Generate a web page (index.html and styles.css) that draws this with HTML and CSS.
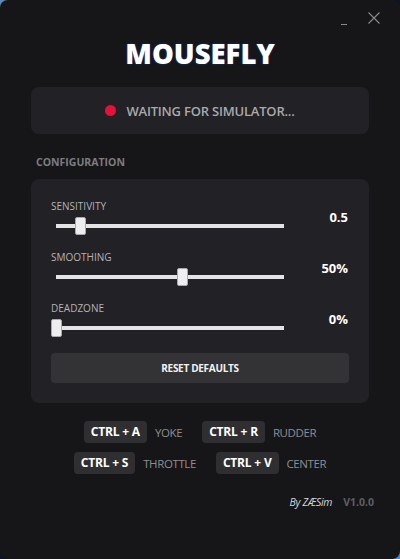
FILE: index.html
```html
<!DOCTYPE html>
<html lang="en">
<head>
<meta charset="utf-8">
<title>MouseFly</title>
<link rel="stylesheet" href="styles.css">
</head>
<body>
<div class="window">
  <div class="titlebar">
    <span class="ctl-min"></span>
    <svg class="ctl-close" width="12" height="12" viewBox="0 0 12 12"><path d="M0.5 0.5 L11.5 11.5 M11.5 0.5 L0.5 11.5" stroke="#8a8a8e" stroke-width="1.1" fill="none"/></svg>
  </div>
  <h1 class="title">MOUSEFLY</h1>
  <div class="card status">
    <span class="dot"></span>
    <span class="status-text">WAITING FOR SIMULATOR...</span>
  </div>
  <div class="section-label">CONFIGURATION</div>
  <div class="card config">
    <div class="row">
      <div class="control">
        <div class="label">SENSITIVITY</div>
        <div class="slider"><div class="track"></div><div class="thumb" style="--p:0.106"></div></div>
      </div>
      <div class="value">0.5</div>
    </div>
    <div class="row">
      <div class="control">
        <div class="label">SMOOTHING</div>
        <div class="slider"><div class="track"></div><div class="thumb" style="--p:0.555"></div></div>
      </div>
      <div class="value">50%</div>
    </div>
    <div class="row">
      <div class="control">
        <div class="label">DEADZONE</div>
        <div class="slider"><div class="track"></div><div class="thumb" style="--p:0"></div></div>
      </div>
      <div class="value">0%</div>
    </div>
    <button class="reset">RESET DEFAULTS</button>
  </div>
  <div class="shortcuts">
    <div class="sc-row">
      <span class="pair"><span class="key">CTRL + A</span><span class="sc-label">YOKE</span></span>
      <span class="pair"><span class="key">CTRL + R</span><span class="sc-label">RUDDER</span></span>
    </div>
    <div class="sc-row">
      <span class="pair"><span class="key">CTRL + S</span><span class="sc-label">THROTTLE</span></span>
      <span class="pair"><span class="key">CTRL + V</span><span class="sc-label">CENTER</span></span>
    </div>
  </div>
  <div class="footer">
    <span class="by">By ZÆSim</span>
    <span class="version">V1.0.0</span>
  </div>
</div>
</body>
</html>
```
FILE: styles.css
```css
html, body {
  margin: 0;
  padding: 0;
}
body {
  width: 400px;
  height: 559px;
  background: linear-gradient(135deg, #5d8fc0 0%, #0c1524 6%, #0c1524 92%, #4f8cc8 100%);
  font-family: "Open Sans", "Noto Sans", sans-serif;
  overflow: hidden;
}
.window {
  box-sizing: border-box;
  width: 400px;
  height: 559px;
  background: #161618;
  border-radius: 8px;
  padding: 0 31px;
  display: flex;
  flex-direction: column;
}
.titlebar {
  height: 37px;
  position: relative;
  margin: 0 -31px;
}
.ctl-min {
  position: absolute;
  left: 341px;
  top: 24px;
  width: 6px;
  height: 1px;
  background: #8a8a8e;
}
.ctl-close {
  position: absolute;
  left: 368px;
  top: 12px;
}
.title {
  margin: 0;
  text-align: center;
  font-size: 27.5px;
  line-height: 34px;
  font-weight: 800;
  color: #ffffff;
  letter-spacing: 0;
  text-shadow: 0 0 3px rgba(25, 45, 110, 0.95), 0 0 1px rgba(25, 45, 110, 0.9);
}
.card {
  background: #222125;
  border-radius: 8px;
}
.status {
  margin-top: 16px;
  height: 47px;
  display: flex;
  align-items: center;
  justify-content: center;
  gap: 10px;
}
.dot {
  width: 11px;
  height: 11px;
  border-radius: 50%;
  background: #e3123b;
}
.status-text {
  font-size: 13px;
  font-weight: 600;
  letter-spacing: -0.2px;
  color: #a9a9ae;
}
.section-label {
  margin-top: 21px;
  padding-left: 5px;
  font-size: 10.5px;
  line-height: 14px;
  font-weight: 700;
  color: #7c7c81;
  margin-bottom: 10px;
}
.config {
  padding: 21px 20px 20px;
  display: flex;
  flex-direction: column;
  gap: 16px;
}
.row {
  display: flex;
  align-items: center;
}
.control {
  width: 238px;
  display: flex;
  flex-direction: column;
  gap: 4px;
}
.label {
  font-size: 10px;
  line-height: 13px;
  color: #b3b3b8;
}
.slider {
  position: relative;
  height: 18px;
}
.track {
  position: absolute;
  left: 5px;
  right: 5px;
  top: 7px;
  height: 4px;
  background: #e4e4e6;
}
.thumb {
  position: absolute;
  top: 0;
  left: calc(var(--p) * (100% - 11px));
  box-sizing: border-box;
  width: 11px;
  height: 18px;
  background: #eeeef0;
  border: 1px solid #a9a9ad;
  border-radius: 2px;
}
.value {
  flex: 1;
  text-align: right;
  font-size: 13px;
  line-height: 13px;
  font-weight: 700;
  color: #ffffff;
  padding-right: 1px;
}
.reset {
  margin-top: 0;
  height: 30px;
  border: none;
  border-radius: 4px;
  background: #333336;
  color: #f2f2f2;
  font-family: "Open Sans", "Noto Sans", sans-serif;
  font-size: 10px;
  font-weight: 700;
  letter-spacing: -0.3px;
}
.shortcuts {
  margin-top: 18px;
  display: flex;
  flex-direction: column;
  gap: 9px;
}
.sc-row {
  display: flex;
  justify-content: center;
  gap: 20px;
}
.pair {
  display: flex;
  align-items: center;
  gap: 8px;
}
.key {
  height: 22px;
  line-height: 22px;
  padding: 0 7px;
  border-radius: 4px;
  background: #2f2f32;
  color: #ffffff;
  font-size: 12px;
  font-weight: 700;
  letter-spacing: -0.2px;
}
.sc-label {
  font-size: 11.5px;
  color: #8d8d92;
  letter-spacing: -0.4px;
}
.footer {
  margin-top: 21px;
  margin-right: -5px;
  display: flex;
  justify-content: flex-end;
  align-items: center;
  gap: 11px;
  font-size: 10.5px;
}
.by {
  font-style: italic;
  color: #d6d6da;
  letter-spacing: -0.3px;
}
.version {
  font-weight: 700;
  color: #5e5e63;
}
```
